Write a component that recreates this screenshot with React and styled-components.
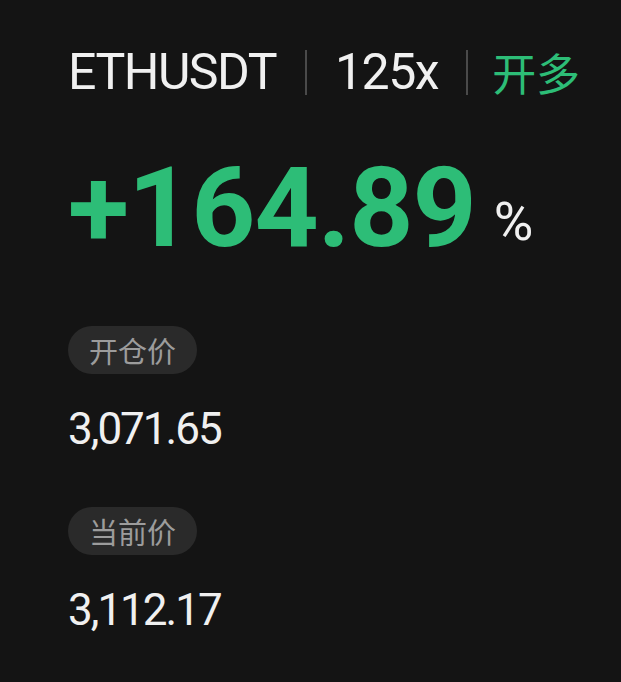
import React from 'react';
import styled, { createGlobalStyle } from 'styled-components';

const colors = {
  bg: '#141414',
  white: '#f0f0f0',
  green: '#2dbd77',
  gray: '#9c9c9c',
  pill: '#2a2a2a',
  divider: '#4a4a4a',
};

const GlobalStyle = createGlobalStyle`
  html, body {
    margin: 0;
    padding: 0;
    background: ${colors.bg};
  }
  body {
    font-family: Roboto, "Noto Sans CJK SC", sans-serif;
    color: ${colors.white};
  }
`;

const Page = styled.div`
  width: 621px;
  height: 682px;
  box-sizing: border-box;
  padding: 49px 0 0 68px;
  display: flex;
  flex-direction: column;
  align-items: flex-start;
`;

const Header = styled.div`
  display: flex;
  align-items: center;
  height: 46px;
`;

const HeaderText = styled.span`
  font-size: ${({cjk}) => (cjk ? '44px' : '50px')};
  font-family: ${({cjk}) => (cjk ? '"Noto Sans CJK SC", sans-serif' : 'Roboto, sans-serif')};
  letter-spacing: ${({cjk}) => (cjk ? '0' : '-1.5px')};
  color: ${({accent}) => (accent ? colors.green : colors.white)};
  line-height: 1;
`;

const Divider = styled.span`
  width: 2px;
  height: 45px;
  background: ${colors.divider};
  margin: 0 ${({narrow}) => (narrow ? '24px' : '28px')} 0 ${({narrow}) => (narrow ? '28px' : '29px')};
`;

const Profit = styled.div`
  margin-top: 57px;
  line-height: 1;
  white-space: nowrap;
`;

const ProfitValue = styled.span`
  font-size: 112px;
  font-weight: 700;
  color: ${colors.green};
  letter-spacing: -1px;
`;

const Percent = styled.span`
  font-size: 54px;
  color: ${colors.white};
  margin-left: 18px;
  vertical-align: 6px;
`;

const Field = styled.div`
  display: flex;
  flex-direction: column;
  align-items: flex-start;
  margin-top: ${({first}) => (first ? '62px' : '56px')};
`;

const Pill = styled.span`
  display: inline-flex;
  align-items: center;
  justify-content: center;
  height: 48px;
  padding: 0 21px;
  border-radius: 24px;
  background: ${colors.pill};
  color: ${colors.gray};
  font-family: "Noto Sans CJK SC", sans-serif;
  font-size: 29px;
`;

const Price = styled.span`
  margin-top: 33px;
  font-size: 44px;
  letter-spacing: -2px;
  line-height: 1;
  color: ${colors.white};
`;

const fields = [
  {label: '开仓价', value: '3,071.65'},
  {label: '当前价', value: '3,112.17'},
];

export default function App() {
  return (
    <>
      <GlobalStyle/>
      <Page>
        <Header>
          <HeaderText>ETHUSDT</HeaderText>
          <Divider/>
          <HeaderText>125x</HeaderText>
          <Divider narrow/>
          <HeaderText cjk accent>开多</HeaderText>
        </Header>
        <Profit>
          <ProfitValue>+164.89</ProfitValue>
          <Percent>%</Percent>
        </Profit>
        {fields.map((field, i) => (
          <Field key={field.label} first={i === 0}>
            <Pill>{field.label}</Pill>
            <Price>{field.value}</Price>
          </Field>
        ))}
      </Page>
    </>
  );
}
